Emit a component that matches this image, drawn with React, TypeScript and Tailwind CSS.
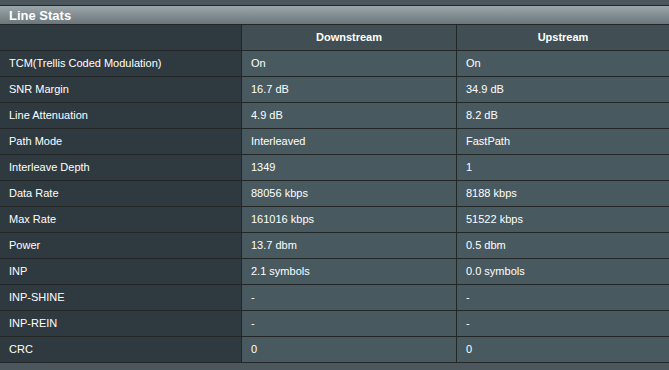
import React from "react";

const rows: [string, string, string][] = [
  ["TCM(Trellis Coded Modulation)", "On", "On"],
  ["SNR Margin", "16.7 dB", "34.9 dB"],
  ["Line Attenuation", "4.9 dB", "8.2 dB"],
  ["Path Mode", "Interleaved", "FastPath"],
  ["Interleave Depth", "1349", "1"],
  ["Data Rate", "88056 kbps", "8188 kbps"],
  ["Max Rate", "161016 kbps", "51522 kbps"],
  ["Power", "13.7 dbm", "0.5 dbm"],
  ["INP", "2.1 symbols", "0.0 symbols"],
  ["INP-SHINE", "-", "-"],
  ["INP-REIN", "-", "-"],
  ["CRC", "0", "0"],
];

export default function App() {
  return (
    <div
      className="w-[669px] h-[370px] bg-[#4b575c] text-white overflow-hidden"
      style={{ fontFamily: '"Liberation Sans", Arial, sans-serif' }}
    >
      <div className="h-[5px]" />
      <div className="h-px bg-[#222627]" />
      <div className="h-[18px] bg-gradient-to-b from-[#9ca7ab] to-[#6a767b] flex items-center pl-[9px] text-[13px] font-bold leading-none">
        Line Stats
      </div>
      <div className="grid grid-cols-[241px_214px_1fr] gap-px bg-[#222627] py-px auto-rows-[25px] text-[11px]">
        <div className="bg-[#2f3a40]" />
        <div className="bg-[#414f55] flex items-center justify-center font-bold">Downstream</div>
        <div className="bg-[#414f55] flex items-center justify-center font-bold">Upstream</div>
        {rows.map(([label, down, up]) => (
          <React.Fragment key={label}>
            <div className="bg-[#2f3a40] flex items-center pl-[9px]">{label}</div>
            <div className="bg-[#485a60] flex items-center pl-[9px]">{down}</div>
            <div className="bg-[#485a60] flex items-center pl-[9px]">{up}</div>
          </React.Fragment>
        ))}
      </div>
    </div>
  );
}
